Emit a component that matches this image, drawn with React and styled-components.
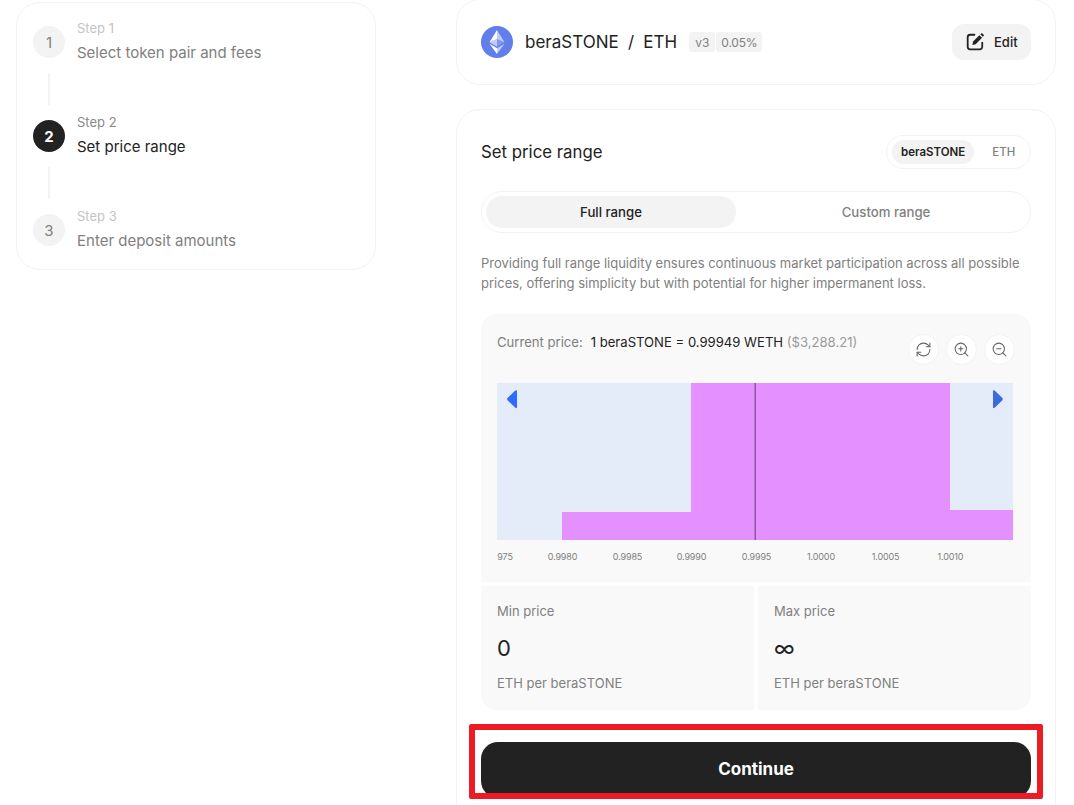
import React, { useState } from "react";
import styled, { createGlobalStyle } from "styled-components";
import { RefreshCw, ZoomIn, ZoomOut } from "lucide-react";

const GlobalStyle = createGlobalStyle`
html, body {
  margin: 0;
  height: 100%;
  overflow: hidden;
  background: #fff;
}
* { box-sizing: border-box; }
body {
  font-family: Inter, "Liberation Sans", sans-serif;
  color: #222;
}
`

const Page = styled.div`
display: flex;
align-items: flex-start;
gap: 80px;
padding: 2px 0 0 16px;
height: 805px;
overflow: hidden;
`

const Card = styled.div`
background: #fff;
border: 1px solid #f3f3f3;
border-radius: 24px;
`

const StepsCard = styled(Card)`
width: 360px;
padding: 23px 16px 0;
height: 268px;
flex-shrink: 0;
`

const StepRow = styled.div`
display: flex;
align-items: flex-start;
gap: 12px;
height: 32px;
`

const StepCircle = styled.div`
width: 32px;
height: 32px;
border-radius: 50%;
display: flex;
align-items: center;
justify-content: center;
font-size: 15px;
font-weight: ${({ active }) => active ? 700 : 400};
background: ${({ active }) => active ? "#222" : "#f3f3f3"};
color: ${({ active }) => active ? "#fff" : "#808080"};
`

const StepText = styled.div`
margin-top: -8px;
display: flex;
flex-direction: column;
`

const StepLabel = styled.span`
font-size: 13px;
line-height: 20px;
color: ${({ active }) => active ? "#8a8a8a" : "#c4c4c4"};
`

const StepTitle = styled.span`
margin-top: 5px;
font-size: 15px;
line-height: 20px;
color: ${({ active }) => active ? "#222" : "#808080"};
`

const Connector = styled.div`
width: 2px;
height: 32px;
margin: 15px 0 15px 15px;
background: #f3f3f3;
`

const Column = styled.div`
width: 600px;
margin-top: -3px;
display: flex;
flex-direction: column;
gap: 24px;
flex-shrink: 0;
`

const PairCard = styled(Card)`
display: flex;
align-items: center;
justify-content: space-between;
padding: 24px;
`

const PairInfo = styled.div`
display: flex;
align-items: center;
`

const PairName = styled.span`
margin-left: 12px;
font-size: 17px;
word-spacing: 4.5px;
`

const Badge = styled.span`
margin-left: ${({ first }) => first ? "12px" : "1px"};
padding: 0 ${({ first }) => first ? "6px" : "5px"};
height: 20px;
display: flex;
align-items: center;
background: #f3f3f3;
border-radius: 3px;
font-size: 12px;
letter-spacing: ${({ first }) => first ? "0" : "-0.2px"};
color: #808080;
`

const EditButton = styled.button`
display: flex;
align-items: center;
gap: 9px;
height: 36px;
width: 79px;
padding: 0 0 1px 14px;
border: none;
border-radius: 12px;
background: #f3f3f3;
font: 500 13px Inter, sans-serif;
color: #222;
`

const RangeCard = styled(Card)`
padding: 25px 24px 40px;
`

const TitleRow = styled.div`
display: flex;
align-items: center;
justify-content: space-between;
`

const Title = styled.h2`
margin: 0;
font-size: 16.8px;
font-weight: 400;
`

const TokenToggle = styled.div`
display: flex;
align-items: center;
width: 145px;
height: 34px;
padding: 4px 5px;
border: 1px solid #f3f3f3;
border-radius: 17px;
`

const TokenOption = styled.span`
height: 24px;
padding: 0 ${({ active }) => active ? "9px" : "18px"};
display: flex;
align-items: center;
border-radius: 12px;
font-size: 11.5px;
font-weight: ${({ active }) => active ? 600 : 500};
background: ${({ active }) => active ? "#f3f3f3" : "transparent"};
color: ${({ active }) => active ? "#222" : "#808080"};
`

const Tabs = styled.div`
display: flex;
gap: 10px;
height: 42px;
margin-top: 22px;
padding: 4px;
border: 1px solid #f3f3f3;
border-radius: 21px;
`

const Tab = styled.div`
width: ${({ wide }) => wide ? "280px" : "250px"};
padding-bottom: 1px;
display: flex;
align-items: center;
justify-content: center;
border-radius: 16px;
font-size: 13.2px;
font-weight: 500;
background: ${({ active }) => active ? "#f3f3f3" : "transparent"};
color: ${({ active }) => active ? "#222" : "#808080"};
`

const Description = styled.p`
margin: 20px 0 0;
font-size: 13px;
line-height: 20px;
color: #808080;
`

const ChartPanel = styled.div`
margin-top: 21px;
height: 268px;
padding: 20px 16px 0;
background: #f9f9f9;
border-radius: 16px 16px 0 0;
`

const PriceRow = styled.div`
display: flex;
justify-content: space-between;
height: 49px;
`

const PriceText = styled.div`
display: flex;
gap: 8px;
font-size: 13.1px;
line-height: 16px;
`

const PriceLabel = styled.span`
color: #808080;
`

const PriceUsd = styled.span`
color: #999;
`

const ZoomButtons = styled.div`
display: flex;
gap: 7px;
`

const RoundButton = styled.button`
width: 31px;
height: 31px;
padding: 0;
display: flex;
align-items: center;
justify-content: center;
border: 1px solid #f3f3f3;
border-radius: 50%;
background: #fff;
color: #666;
`

const ChartSvg = styled.svg`
display: block;
width: 516px;
height: 190px;
`

const AxisText = styled.text`
font-size: 9px;
letter-spacing: -0.15px;
fill: #808080;
`

const Limits = styled.div`
display: grid;
grid-template-columns: 273px 273px;
gap: 4px;
margin-top: 4px;
`

const LimitBox = styled.div`
height: 124px;
padding: 17px 16px 0;
background: #f9f9f9;
border-radius: ${({ right }) => right ? "0 0 16px 0" : "0 0 0 16px"};
`

const LimitLabel = styled.div`
font-size: 13px;
line-height: 16px;
color: #808080;
`

const LimitValue = styled.div`
margin-top: 15px;
font-size: 22px;
line-height: 28px;
color: #222;
`

const LimitUnit = styled.div`
margin-top: 13px;
font-size: 13px;
line-height: 16px;
color: #808080;
`

const ContinueWrap = styled.div`
position: relative;
margin-top: 32px;
`

const ContinueButton = styled.button`
display: block;
width: 100%;
height: 56px;
padding-bottom: 3px;
border: none;
border-radius: 17px;
background: #222;
color: #fff;
font: 700 17px Inter, sans-serif;
`

const Highlight = styled.div`
position: absolute;
top: -18px;
left: -12px;
right: -12px;
bottom: -1px;
border: 6px solid #ed1c24;
border-radius: 2px;
pointer-events: none;
`

const EthIcon = () => (
    <svg width="32" height="32" viewBox="0 0 32 32">
        <circle cx="16" cy="16" r="16" fill="#627eea" />
        <polygon points="16,4 16,13 23.5,16.3" fill="#fff" fillOpacity="0.6" />
        <polygon points="16,4 8.5,16.3 16,13" fill="#fff" />
        <polygon points="16,13 16,20.7 23.5,16.3" fill="#fff" fillOpacity="0.2" />
        <polygon points="16,13 8.5,16.3 16,20.7" fill="#fff" fillOpacity="0.6" />
        <polygon points="16,22.2 16,28 23.5,17.8" fill="#fff" fillOpacity="0.6" />
        <polygon points="16,22.2 8.5,17.8 16,28" fill="#fff" />
    </svg>
)

const EditIcon = () => (
    <svg width="19" height="19" viewBox="0 0 18 18" fill="none">
        <path d="M8 2.6H4A2.4 2.4 0 0 0 1.6 5v9A2.4 2.4 0 0 0 4 16.4h9a2.4 2.4 0 0 0 2.4-2.4V10" stroke="#222" strokeWidth="1.7" strokeLinecap="round" />
        <path d="M6 12.2l.7-3.2 6-6 2.5 2.5-6 6z" fill="#222" />
        <path d="M13.6 2.2l.8-.8a.9.9 0 0 1 1.2 0l1.1 1.1a.9.9 0 0 1 0 1.2l-.8.8z" fill="#222" />
    </svg>
)

const ticks = [
    [8, "975"],
    [65.5, "0.9980"],
    [130.5, "0.9985"],
    [194.5, "0.9990"],
    [259.5, "0.9995"],
    [324, "1.0000"],
    [388.5, "1.0005"],
    [453.5, "1.0010"],
]

const LiquidityChart = () => (
    <ChartSvg viewBox="0 0 516 190">
        <rect x="0" y="0" width="516" height="157" fill="#e4ebf9" />
        <rect x="65" y="129" width="129" height="28" fill="#e590ff" />
        <rect x="194" y="0" width="259" height="157" fill="#e590ff" />
        <rect x="453" y="127" width="63" height="30" fill="#e590ff" />
        <rect x="257.5" y="0" width="1.5" height="157" fill="#8c5a9c" />
        <path d="M20 8v16.2a.9.9 0 0 1-1.6.6l-7.6-7.2a2 2 0 0 1 0-2.8l7.6-7.2a.9.9 0 0 1 1.6.4z" fill="#2f6bff" />
        <path d="M496 8v16.2a.9.9 0 0 0 1.6.6l7.6-7.2a2 2 0 0 0 0-2.8l-7.6-7.2a.9.9 0 0 0-1.6.4z" fill="#3e68de" />
        {ticks.map(([x, label]) => (
            <AxisText key={label} x={x} y="177" textAnchor="middle">{label}</AxisText>
        ))}
    </ChartSvg>
)

const steps = [
    { n: 1, label: "Step 1", title: "Select token pair and fees" },
    { n: 2, label: "Step 2", title: "Set price range", active: true },
    { n: 3, label: "Step 3", title: "Enter deposit amounts" },
]

const App = () => {
    const [range] = useState("full");

    return (
        <>
            <GlobalStyle />
            <Page>
                <StepsCard>
                    {steps.map((s, i) => (
                        <React.Fragment key={s.n}>
                            <StepRow>
                                <StepCircle active={s.active}>{s.n}</StepCircle>
                                <StepText>
                                    <StepLabel active={s.active}>{s.label}</StepLabel>
                                    <StepTitle active={s.active}>{s.title}</StepTitle>
                                </StepText>
                            </StepRow>
                            {i < steps.length - 1 && <Connector />}
                        </React.Fragment>
                    ))}
                </StepsCard>
                <Column>
                    <PairCard>
                        <PairInfo>
                            <EthIcon />
                            <PairName>beraSTONE / ETH</PairName>
                            <Badge first>v3</Badge>
                            <Badge>0.05%</Badge>
                        </PairInfo>
                        <EditButton><EditIcon />Edit</EditButton>
                    </PairCard>
                    <RangeCard>
                        <TitleRow>
                            <Title>Set price range</Title>
                            <TokenToggle>
                                <TokenOption active>beraSTONE</TokenOption>
                                <TokenOption>ETH</TokenOption>
                            </TokenToggle>
                        </TitleRow>
                        <Tabs>
                            <Tab active={range === "full"}>Full range</Tab>
                            <Tab wide active={range === "custom"}>Custom range</Tab>
                        </Tabs>
                        <Description>
                            Providing full range liquidity ensures continuous market participation across all possible prices, offering simplicity but with potential for higher impermanent loss.
                        </Description>
                        <ChartPanel>
                            <PriceRow>
                                <PriceText>
                                    <PriceLabel>Current price:</PriceLabel>
                                    <span>1 beraSTONE = 0.99949 WETH <PriceUsd>($3,288.21)</PriceUsd></span>
                                </PriceText>
                                <ZoomButtons>
                                    <RoundButton><RefreshCw size={17} strokeWidth={1.5} /></RoundButton>
                                    <RoundButton><ZoomIn size={17} strokeWidth={1.5} /></RoundButton>
                                    <RoundButton><ZoomOut size={17} strokeWidth={1.5} /></RoundButton>
                                </ZoomButtons>
                            </PriceRow>
                            <LiquidityChart />
                        </ChartPanel>
                        <Limits>
                            <LimitBox>
                                <LimitLabel>Min price</LimitLabel>
                                <LimitValue>0</LimitValue>
                                <LimitUnit>ETH per beraSTONE</LimitUnit>
                            </LimitBox>
                            <LimitBox right>
                                <LimitLabel>Max price</LimitLabel>
                                <LimitValue>∞</LimitValue>
                                <LimitUnit>ETH per beraSTONE</LimitUnit>
                            </LimitBox>
                        </Limits>
                        <ContinueWrap>
                            <ContinueButton>Continue</ContinueButton>
                            <Highlight />
                        </ContinueWrap>
                    </RangeCard>
                </Column>
            </Page>
        </>
    )
};

export default App;
